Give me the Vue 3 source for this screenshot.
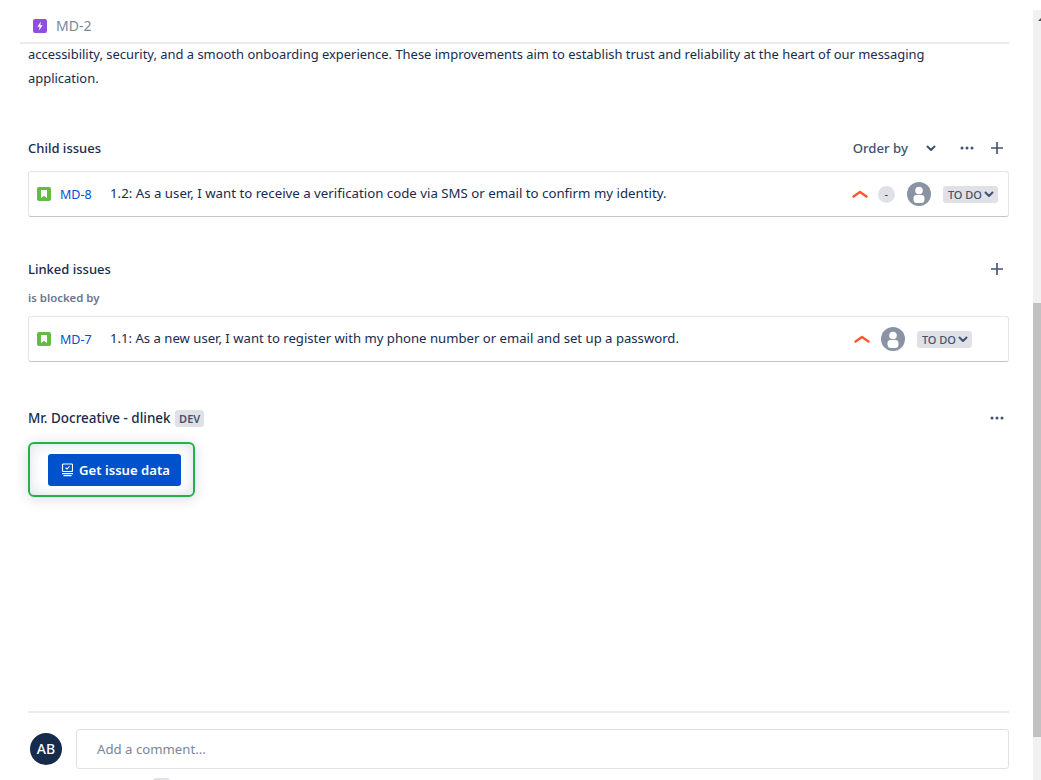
<script setup>
const issues = {
  child: { key: 'MD-8', title: '1.2: As a user, I want to receive a verification code via SMS or email to confirm my identity.' },
  linked: { key: 'MD-7', title: '1.1: As a new user, I want to register with my phone number or email and set up a password.' }
}
</script>

<template>
  <div class="page">
    <main class="content">
      <header class="top">
        <svg class="epic" viewBox="0 0 14 14" width="14" height="14">
          <rect width="14" height="14" rx="2" fill="#904ee2" />
          <path d="M7.9 2.6 4.4 7.7h2.2L6 11.4l3.6-5.2H7.3z" fill="#fff" />
        </svg>
        <span class="top-key">MD-2</span>
      </header>

      <p class="desc">accessibility, security, and a smooth onboarding experience. These improvements aim to establish trust and reliability at the heart of our messaging application.</p>

      <section class="child">
        <div class="heading">
          <h2>Child issues</h2>
          <div class="tools">
            <span class="order">Order by</span>
            <svg class="chev" viewBox="0 0 10 7" width="10" height="7"><path d="M1.5 1.5 5 5l3.5-3.5" fill="none" stroke="#42526e" stroke-width="2" stroke-linecap="round" stroke-linejoin="round" /></svg>
            <svg class="dots" viewBox="0 0 14 4" width="14" height="4"><circle cx="2" cy="2" r="1.5" fill="#42526e" /><circle cx="7" cy="2" r="1.5" fill="#42526e" /><circle cx="12" cy="2" r="1.5" fill="#42526e" /></svg>
            <svg class="plus" viewBox="0 0 12 12" width="12" height="12"><path d="M6 0v12M0 6h12" stroke="#42526e" stroke-width="1.6" /></svg>
          </div>
        </div>
        <div class="card">
          <svg class="story" viewBox="0 0 14 14" width="14" height="14"><rect width="14" height="14" rx="2" fill="#65ba43" /><path d="M4 3h6v8L7 8.8 4 11z" fill="#fff" /></svg>
          <a class="key">{{ issues.child.key }}</a>
          <span class="title">{{ issues.child.title }}</span>
          <div class="meta">
            <svg class="prio" viewBox="0 0 16 8" width="16" height="8"><path d="M1.5 6.5 8 2l6.5 4.5" fill="none" stroke="#ff5630" stroke-width="2.4" stroke-linecap="round" stroke-linejoin="round" /></svg>
            <span class="est">-</span>
            <svg class="user" viewBox="0 0 24 24" width="24" height="24"><circle cx="12" cy="12" r="12" fill="#8993a4" /><circle cx="12" cy="8.5" r="3.8" fill="#fff" /><path d="M6.5 16a3 3 0 0 1 3-3h5a3 3 0 0 1 3 3v1.5a3.5 3.5 0 0 1-3.5 3.5h-4a3.5 3.5 0 0 1-3.5-3.5z" fill="#fff" /></svg>
            <span class="status">TO DO<svg viewBox="0 0 10 7" width="10" height="7"><path d="M1.5 1.5 5 5l3.5-3.5" fill="none" stroke="#42526e" stroke-width="2" stroke-linecap="round" stroke-linejoin="round" /></svg></span>
          </div>
        </div>
      </section>

      <section class="linked">
        <div class="heading">
          <h2>Linked issues</h2>
          <div class="tools">
            <svg class="plus" viewBox="0 0 12 12" width="12" height="12"><path d="M6 0v12M0 6h12" stroke="#42526e" stroke-width="1.6" /></svg>
          </div>
        </div>
        <h3>is blocked by</h3>
        <div class="card card-linked">
          <svg class="story" viewBox="0 0 14 14" width="14" height="14"><rect width="14" height="14" rx="2" fill="#65ba43" /><path d="M4 3h6v8L7 8.8 4 11z" fill="#fff" /></svg>
          <a class="key">{{ issues.linked.key }}</a>
          <span class="title">{{ issues.linked.title }}</span>
          <div class="meta">
            <svg class="prio" viewBox="0 0 16 8" width="16" height="8"><path d="M1.5 6.5 8 2l6.5 4.5" fill="none" stroke="#ff5630" stroke-width="2.4" stroke-linecap="round" stroke-linejoin="round" /></svg>
            <svg class="user" viewBox="0 0 24 24" width="24" height="24"><circle cx="12" cy="12" r="12" fill="#8993a4" /><circle cx="12" cy="8.5" r="3.8" fill="#fff" /><path d="M6.5 16a3 3 0 0 1 3-3h5a3 3 0 0 1 3 3v1.5a3.5 3.5 0 0 1-3.5 3.5h-4a3.5 3.5 0 0 1-3.5-3.5z" fill="#fff" /></svg>
            <span class="status">TO DO<svg viewBox="0 0 10 7" width="10" height="7"><path d="M1.5 1.5 5 5l3.5-3.5" fill="none" stroke="#42526e" stroke-width="2" stroke-linecap="round" stroke-linejoin="round" /></svg></span>
          </div>
        </div>
      </section>

      <section class="app">
        <div class="heading">
          <h2 class="app-name">Mr. Docreative - dlinek <span class="dev">DEV</span></h2>
          <div class="tools">
            <svg class="dots" viewBox="0 0 14 4" width="14" height="4"><circle cx="2" cy="2" r="1.5" fill="#42526e" /><circle cx="7" cy="2" r="1.5" fill="#42526e" /><circle cx="12" cy="2" r="1.5" fill="#42526e" /></svg>
          </div>
        </div>
        <div class="frame">
          <button class="get">
            <svg viewBox="-2 0 14 14" width="14" height="14">
              <rect x="1.5" y="1" width="10" height="7.5" rx="1" fill="none" stroke="#fff" stroke-width="1.2" />
              <path d="M4.5 4.8 6 6l2.500-2.700" fill="none" stroke="#fff" stroke-width="1.1" />
              <path d="M1 10.700h11M2.500 12.700h8" stroke="#fff" stroke-width="1.2" />
            </svg>
            Get issue data
          </button>
        </div>
      </section>

      <footer class="comment">
        <div class="avatar">AB</div>
        <div class="input">Add a comment...</div>
      </footer>
    </main>

    <div class="hint"></div>

    <div class="scrollbar">
      <span class="arrow"></span>
      <span class="thumb"></span>
    </div>
  </div>
</template>

<style scoped>
.page {
  position: relative;
  width: 1041px;
  height: 780px;
  overflow: hidden;
  background: #fff;
  font-family: "Noto Sans", "Open Sans", sans-serif;
  font-size: 13px;
  color: #172b4d;
}
.content {
  width: 981px;
  margin-left: 28px;
}
.top {
  height: 44px;
  margin-left: -8px;
  padding: 19px 0 0 13px;
  box-sizing: border-box;
  border-bottom: 2px solid #ebecf0;
  display: flex;
  align-items: flex-start;
}
.top .epic { flex: none; }
.top-key {
  margin-left: 9px;
  line-height: 14px;
  font-size: 14px;
  color: #7a869a;
}
.desc {
  margin: -2px 0 0;
  height: 48px;
  padding-right: 40px;
  line-height: 24px;
  font-size: 12.95px;
}
.heading {
  display: flex;
  align-items: center;
  justify-content: space-between;
  height: 20px;
}
h2 {
  margin: 0;
  font-size: 13px;
  font-weight: 500;
  line-height: 20px;
  color: #172b4d;
}
.app-name { font-size: 13.45px; }
.tools {
  display: flex;
  align-items: center;
}
.order {
  color: #42526e;
  font-size: 13.2px;
  font-weight: 500;
}
.chev { margin-left: 18px; }
.dots { margin-left: 24px; }
.plus { margin-left: 17px; margin-right: 6px; }
.child { margin-top: 48px; }
.card {
  display: flex;
  align-items: center;
  height: 46px;
  box-sizing: border-box;
  margin-top: 13px;
  padding: 0 10px 0 8px;
  border: 1px solid #e4e6eb;
  border-bottom-color: #c1c7d0;
  border-radius: 3px;
}
.key {
  margin-left: 9px;
  width: 50px;
  color: #0052cc;
  font-size: 12.5px;
}
.title {
  padding-bottom: 2px;
  font-size: 13.25px;
  white-space: nowrap;
}
.card-linked .title { font-size: 13.13px; }
.meta {
  display: flex;
  align-items: center;
  margin-left: auto;
}
.est {
  width: 17px;
  height: 17px;
  margin-left: 10px;
  border-radius: 50%;
  background: #dfe1e6;
  text-align: center;
  line-height: 16px;
  font-size: 11px;
}
.user { margin-left: 12px; }
.status {
  display: flex;
  align-items: center;
  gap: 2px;
  height: 17px;
  margin-left: 12px;
  padding: 0 4px 0 5px;
  border-radius: 3px;
  background: #dfe1e6;
  color: #42526e;
  font-size: 11px;
  font-weight: 500;
}
.linked { margin-top: 42px; }
.linked .plus { margin-left: 0; }
h3 {
  margin: 9px 0 0;
  font-size: 11.4px;
  font-weight: 600;
  line-height: 20px;
  color: #6b778c;
}
.card-linked { margin-top: 8px; padding-right: 36px; }
.card-linked .user { margin-left: 11px; }
.app { margin-top: 46px; }
.dev {
  margin-left: 1px;
  padding: 1px 4px;
  border-radius: 3px;
  background: #dfe1e6;
  color: #42526e;
  font-size: 11px;
  font-weight: 600;
}
.app .dots { margin-right: 5px; }
.frame {
  width: 167px;
  height: 55px;
  box-sizing: border-box;
  margin-top: 14px;
  padding: 10px 0 0 18px;
  border: 2px solid #24b04a;
  border-radius: 6px;
  box-shadow: 0 2px 14px rgba(9, 30, 66, 0.16), inset 0 0 14px rgba(9, 30, 66, 0.14);
}
.get {
  display: flex;
  align-items: center;
  justify-content: center;
  gap: 6px;
  width: 133px;
  height: 32px;
  border: 0;
  border-radius: 3px;
  background: #0052cc;
  color: #fff;
  font-family: inherit;
  font-size: 13.1px;
  font-weight: 600;
}
.comment {
  display: flex;
  align-items: flex-start;
  gap: 14px;
  height: 58px;
  box-sizing: border-box;
  margin-top: 214px;
  padding: 16px 0 0 2px;
  border-top: 2px solid #ebecf0;
}
.avatar {
  flex: none;
  width: 32px;
  height: 32px;
  margin-top: 4px;
  border-radius: 50%;
  background: #172b4d;
  color: #fff;
  text-align: center;
  line-height: 32px;
  font-size: 14px;
  font-weight: 500;
}
.input {
  flex: 1;
  height: 40px;
  box-sizing: border-box;
  padding-left: 20px;
  border: 1px solid #dfe1e6;
  border-radius: 3px;
  line-height: 38px;
  color: #7a869a;
  font-size: 13.2px;
}
.hint {
  position: absolute;
  left: 153px;
  top: 778px;
  width: 17px;
  height: 6px;
  border-radius: 3px;
  background: #dfe1e6;
}
.scrollbar {
  position: absolute;
  top: 10px;
  right: 0;
  bottom: 0;
  width: 8px;
  overflow: hidden;
  background: #f1f1f1;
}
.arrow {
  position: absolute;
  left: 5px;
  top: 8px;
  width: 0;
  height: 0;
  border-left: 3px solid transparent;
  border-right: 3px solid transparent;
  border-bottom: 3px solid #505050;
}
.thumb {
  position: absolute;
  left: 0;
  top: 293px;
  width: 100%;
  height: 434px;
  background: #c1c1c1;
}
</style>
